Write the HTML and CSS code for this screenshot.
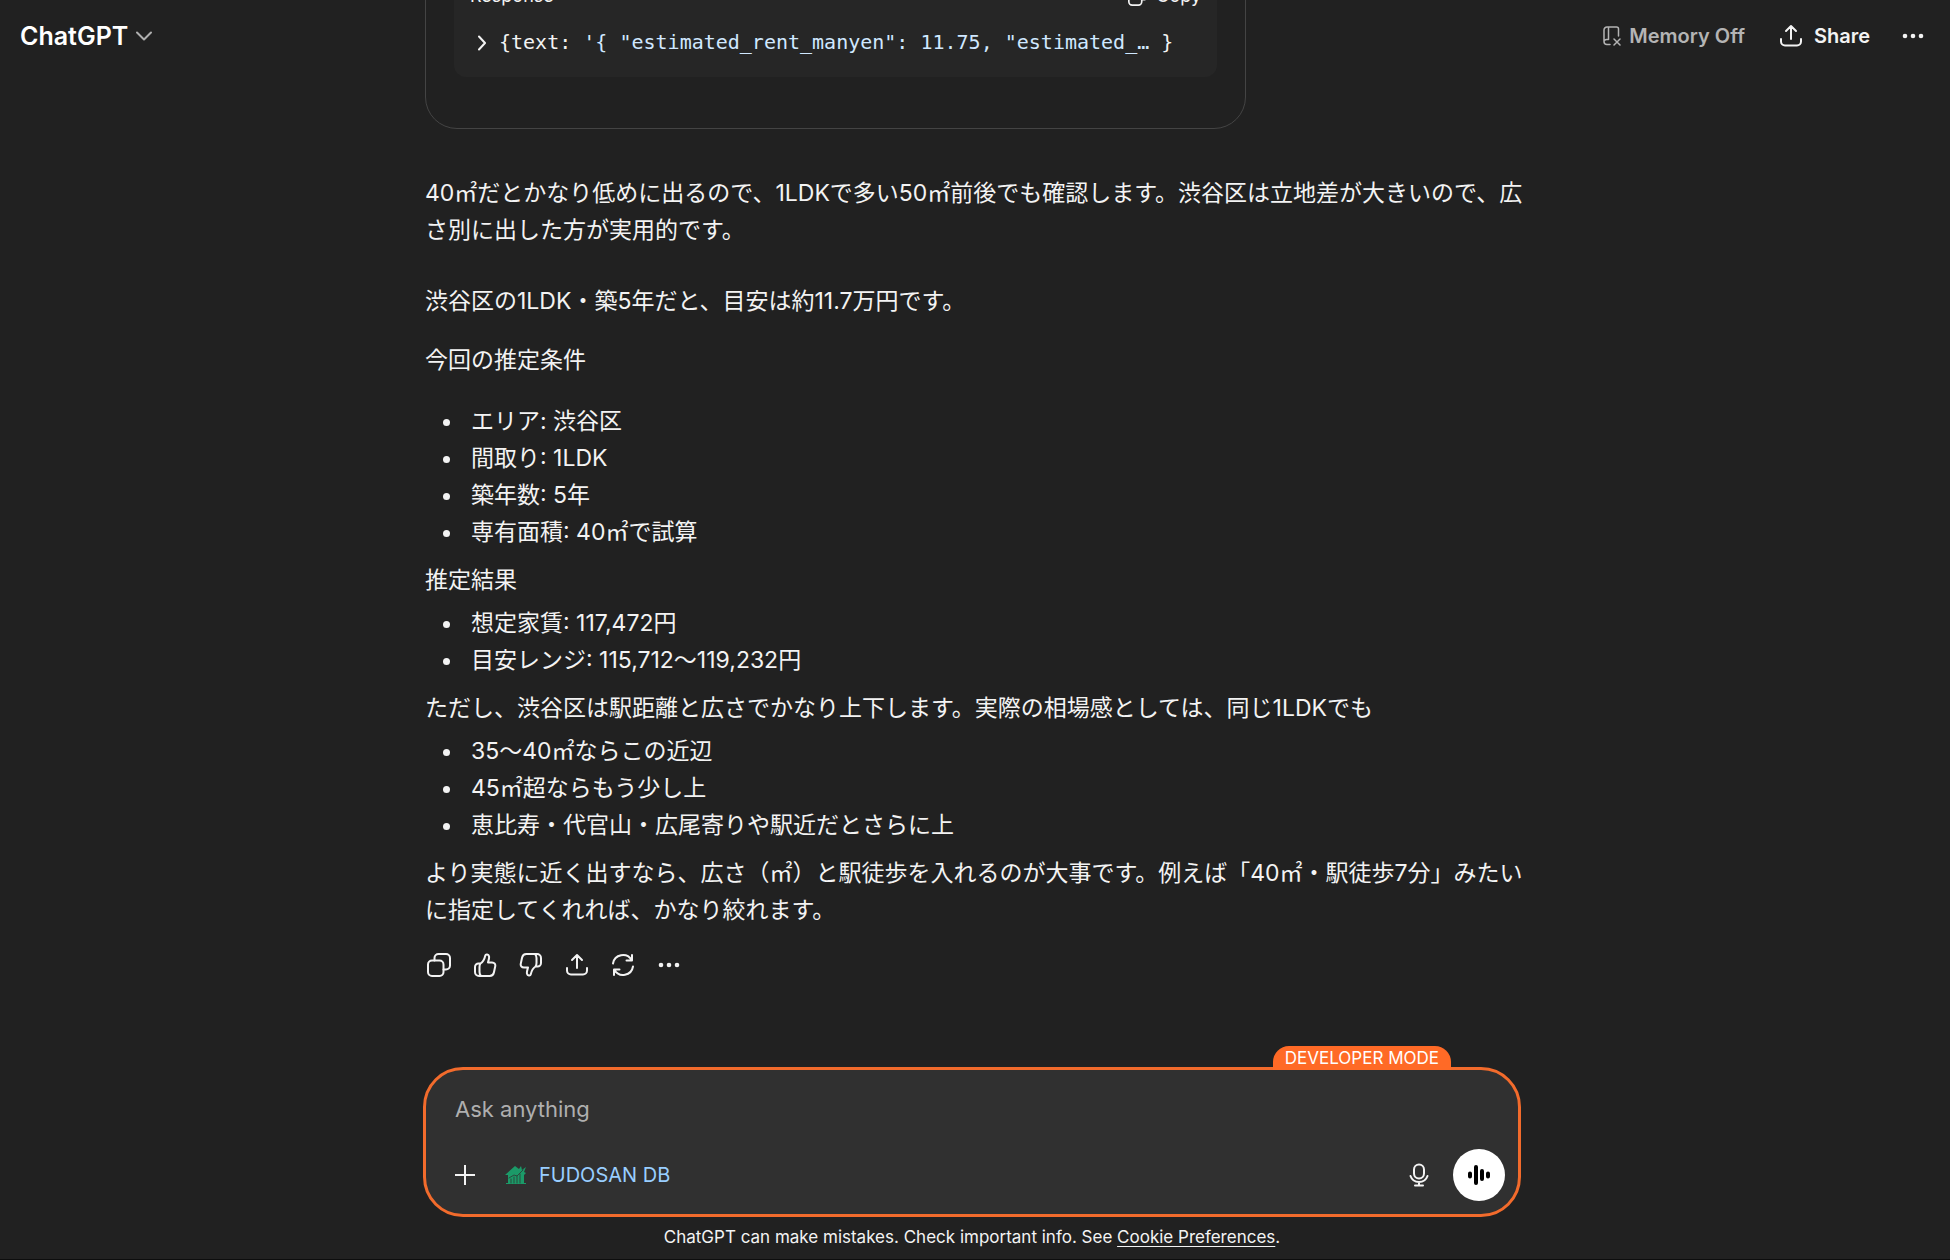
FILE: index.html
```html
<!doctype html>
<html lang="ja">
	<head>
		<title>ChatGPT</title>
		<meta charset="UTF-8">
		<meta name="viewport" content="width=device-width, initial-scale=1.0">
		<link rel="stylesheet" href="styles.css">
	</head>

	<body>
		<!-- shared icons -->
		<svg class="sprite" aria-hidden="true">
			<symbol id="icon-share" viewBox="0 0 24 24">
				<path d="M12 15V2M7 7l5-5 5 5M2 15v2.500a4 4 0 0 0 4 4h12a4 4 0 0 0 4-4V15" />
			</symbol>
			<symbol id="icon-dots" viewBox="0 0 24 24">
				<g fill="currentColor" stroke="none">
					<circle cx="4" cy="12" r="2.300" />
					<circle cx="12" cy="12" r="2.300" />
					<circle cx="20" cy="12" r="2.300" />
				</g>
			</symbol>
			<symbol id="icon-copy" viewBox="0 0 24 24">
				<rect x="1" y="7.500" width="15.500" height="15.500" rx="4" />
				<path d="M7.500 7.500V5a4 4 0 0 1 4-4H19a4 4 0 0 1 4 4v7.500a4 4 0 0 1-4 4h-2.500" />
			</symbol>
		</svg>

		<header class="topbar">
			<button type="button" class="model-button">
				ChatGPT
				<svg class="chevron" viewBox="0 0 16 10"><path d="M1 1.500l7 7 7-7" /></svg>
			</button>

			<div class="topbar-actions">
				<button type="button" class="memory-button">
					<svg class="memory-icon" viewBox="0 0 18 20">
						<path d="M7 18.500H4a3 3 0 0 1-3-3V4a3 3 0 0 1 3-3h9.500a2 2 0 0 1 2 2v7M5.500 1v12.500M1 16a2.500 2.500 0 0 1 2.500-2.500h2M11 13l6 6M17 13l-6 6" />
					</svg>
					Memory Off
				</button>
				<button type="button" class="share-button">
					<svg class="icon"><use href="#icon-share" /></svg>
					Share
				</button>
				<button type="button" class="more-button" aria-label="More">
					<svg class="icon"><use href="#icon-dots" /></svg>
				</button>
			</div>
		</header>

		<main class="thread">
			<div class="column">
				<section class="tool-card">
					<div class="response">
						<div class="response-head">
							<span>Response</span>
							<button type="button" class="copy-button">
								<svg class="icon-small"><use href="#icon-copy" /></svg>
								Copy
							</button>
						</div>
						<div class="json-line">
							<svg class="expand" viewBox="0 0 8 16"><path d="M1 1.500l6 6.500-6 6.500" /></svg>
							<code>{text: <span class="string">'{ "estimated_rent_manyen": 11.75, "estimated_…</span> }</code>
						</div>
					</div>
				</section>

				<article class="message">
					<p class="intro">40㎡だとかなり低めに出るので、1LDKで多い50㎡前後でも確認します。渋谷区は立地差が大きいので、広さ別に出した方が実用的です。</p>
					<p class="summary">渋谷区の1LDK・築5年だと、目安は約11.7万円です。</p>
					<p class="conditions">今回の推定条件</p>
					<ul>
						<li>エリア: 渋谷区</li>
						<li>間取り: 1LDK</li>
						<li>築年数: 5年</li>
						<li>専有面積: 40㎡で試算</li>
					</ul>
					<p>推定結果</p>
					<ul>
						<li>想定家賃: 117,472円</li>
						<li>目安レンジ: 115,712〜119,232円</li>
					</ul>
					<p>ただし、渋谷区は駅距離と広さでかなり上下します。実際の相場感としては、同じ1LDKでも</p>
					<ul>
						<li>35〜40㎡ならこの近辺</li>
						<li>45㎡超ならもう少し上</li>
						<li>恵比寿・代官山・広尾寄りや駅近だとさらに上</li>
					</ul>
					<p>より実態に近く出すなら、広さ（㎡）と駅徒歩を入れるのが大事です。例えば「40㎡・駅徒歩7分」みたいに指定してくれれば、かなり絞れます。</p>
				</article>

				<div class="message-actions">
					<button type="button" aria-label="Copy"><svg class="icon"><use href="#icon-copy" /></svg></button>
					<button type="button" aria-label="Good response">
						<svg class="icon" viewBox="0 0 24 24">
							<path d="M7.500 10.500C10 9 11.500 6 12.300 2.500c.400-1.600 3.200-1.300 3.700.700.500 2-.500 4-1 6.300h4c2.500 0 3.700 1.800 3.200 4l-1.300 6c-.500 2.200-2 3.500-4.200 3.500H6a4 4 0 0 1-4-4v-5a3.500 3.500 0 0 1 3.500-3.500zM7.500 10.500c-.700 1-1 2-1 3.500v5c0 1.500.500 3 1.500 4" />
						</svg>
					</button>
					<button type="button" aria-label="Bad response">
						<svg class="icon flipped" viewBox="0 0 24 24">
							<path d="M7.500 10.500C10 9 11.500 6 12.300 2.500c.400-1.600 3.200-1.300 3.700.700.500 2-.500 4-1 6.300h4c2.500 0 3.700 1.800 3.200 4l-1.300 6c-.500 2.200-2 3.500-4.200 3.500H6a4 4 0 0 1-4-4v-5a3.500 3.500 0 0 1 3.500-3.500zM7.500 10.500c-.700 1-1 2-1 3.500v5c0 1.500.500 3 1.500 4" />
						</svg>
					</button>
					<button type="button" aria-label="Share"><svg class="icon"><use href="#icon-share" /></svg></button>
					<button type="button" aria-label="Try again">
						<svg class="icon" viewBox="0 0 24 24">
							<path d="M2 10.500A10 10 0 0 1 20.500 7M21 2v5.500h-5.500M22 13.500A10 10 0 0 1 3.500 17M3 22v-5.500h5.500" />
						</svg>
					</button>
					<button type="button" aria-label="More"><svg class="icon"><use href="#icon-dots" /></svg></button>
				</div>
			</div>
		</main>

		<footer class="dock">
			<form class="composer">
				<span class="mode-badge">DEVELOPER MODE</span>
				<input type="text" class="prompt" placeholder="Ask anything" aria-label="Ask anything">
				<div class="composer-row">
					<button type="button" aria-label="Add">
						<svg class="icon-small" viewBox="0 0 20 20"><path d="M10 0v20M0 10h20" /></svg>
					</button>
					<button type="button" class="app-button">
						<svg class="house" viewBox="0 0 22 20">
							<path d="M0 10L10 1l4 3 2-3 1 4 4-3-2 5 2 1-2 2v8h2v1H1v-1h2v-8z" />
							<path class="house-lines" d="M6 18v-4M9 18v-6M12 18v-7M15 18V9M4 13l5-3 3 1 6-6" />
						</svg>
						FUDOSAN DB
					</button>
					<button type="button" class="mic-button" aria-label="Dictate">
						<svg class="icon" viewBox="0 0 24 24">
							<path d="M12 1.500a5 5 0 0 1 5 5v4a5 5 0 0 1-10 0v-4a5 5 0 0 1 5-5zM3.500 13a9 9 0 0 0 17 0M12 19v3.500M8 22.500h8" />
						</svg>
					</button>
					<button type="button" class="voice-button" aria-label="Voice mode">
						<svg class="icon" viewBox="0 0 24 24"><path d="M3 10.500v3M9 4v16M15 8v8M21 10.500v3" /></svg>
					</button>
				</div>
			</form>
			<p class="note">ChatGPT can make mistakes. Check important info. See <a href="#">Cookie Preferences</a>.</p>
		</footer>
	</body>
</html>
```

FILE: styles.css
```css
* {
	box-sizing: border-box;
	padding: 0;
	margin: 0;
}

body {
	display: grid;
	grid-template-rows: minmax(0, 1fr) auto;
	height: 100vh;
	overflow: hidden;
	color: #f3f3f3;
	background: #212121;
	border-bottom: 1px solid #0d0d0d;
	font-family: Inter, "Noto Sans CJK JP", sans-serif;
	font-size: 23px;
	line-height: 37px;
}

button {
	display: flex;
	align-items: center;
	color: inherit;
	background: none;
	border: none;
	font: inherit;
	cursor: pointer;
}

button:hover {
	opacity: 0.8;
}

svg {
	flex: none;
	fill: none;
	stroke: currentColor;
	stroke-width: 2;
	stroke-linecap: round;
	stroke-linejoin: round;
}

.sprite {
	position: absolute;
	width: 0;
	height: 0;
}

.icon {
	width: 24px;
	height: 24px;
}

.icon-small {
	width: 20px;
	height: 20px;
}

.flipped {
	transform: rotate(180deg);
}


.topbar {
	grid-area: 1 / 1;
	align-self: start;
	z-index: 1;
	display: flex;
	justify-content: space-between;
	align-items: center;
	height: 72px;
	padding: 0 25px 0 20px;
	pointer-events: none;
}

.topbar button {
	pointer-events: auto;
}

.topbar-actions {
	display: flex;
	align-items: center;
	font-size: 20px;
	font-weight: 600;
}

.model-button {
	gap: 8px;
	color: #fff;
	font-size: 25px;
	font-weight: 600;
}

.chevron {
	width: 16px;
	height: 10px;
	color: #afafaf;
}

.memory-button {
	gap: 8px;
	margin-right: 34px;
	color: #b4b4b4;
}

.memory-icon {
	width: 18px;
	height: 20px;
	stroke-width: 1.5;
}

.share-button {
	gap: 11px;
	margin-right: 31px;
}


.thread {
	grid-area: 1 / 1;
	display: flex;
	flex-direction: column;
	justify-content: flex-end;
	align-items: center;
	min-height: 0;
	padding: 0 28px 90px;
	overflow: hidden;
}

.column {
	width: 100%;
	max-width: 1100px;
}

.tool-card {
	max-width: 821px;
	margin-bottom: 46px;
	padding: 28px;
	padding-bottom: 51px;
	border: 1px solid #444;
	border-radius: 32px;
}

.response {
	padding: 16px;
	background: #262626;
	border-radius: 12px;
	font-size: 18px;
}

.response-head {
	display: flex;
	justify-content: space-between;
	align-items: center;
	margin-bottom: 10px;
}

.copy-button {
	gap: 8px;
}

.json-line {
	display: flex;
	align-items: center;
	gap: 13px;
	padding-left: 8px;
}

.expand {
	width: 8px;
	height: 16px;
}

code {
	font-family: "DejaVu Sans Mono", monospace;
	font-size: 20px;
	white-space: nowrap;
}

.string {
	color: #d0e8ff;
}


.message p {
	margin-top: 11px;
}

.message ul {
	margin-top: 6px;
	padding-left: 39px;
}

.message li {
	padding-left: 7px;
}

.message .intro {
	margin-top: 0;
}

.message .summary {
	margin-top: 34px;
}

.message .conditions {
	margin-top: 22px;
}

.message .conditions + ul {
	margin-top: 24px;
}

.message-actions {
	display: flex;
	gap: 22px;
	margin-top: 24px;
	padding-left: 2px;
}


.dock {
	display: flex;
	flex-direction: column;
	align-items: center;
	padding: 0 29px 1px 23px;
}

.composer {
	position: relative;
	width: 100%;
	max-width: 1098px;
	padding: 21px 13px 13px 29px;
	background: #303030;
	border: 3px solid #f26b2c;
	border-radius: 40px;
}

.mode-badge {
	position: absolute;
	right: 67px;
	bottom: 100%;
	height: 24px;
	padding: 0 12px;
	color: #fff;
	background: #ff6a26;
	border-radius: 16px 16px 0 0;
	font-size: 17px;
	line-height: 24px;
}

.prompt {
	display: block;
	width: 100%;
	height: 36px;
	color: inherit;
	background: none;
	border: none;
	outline: none;
	font: inherit;
	font-size: 22px;
}

.prompt::placeholder {
	color: #afafaf;
	opacity: 1;
}

.composer-row {
	display: flex;
	align-items: center;
	margin-top: 22px;
}

.app-button {
	gap: 12px;
	margin-left: 30px;
	color: #99ceff;
	font-size: 20px;
}

.house {
	width: 22px;
	height: 20px;
	fill: #1b9a68;
	stroke: none;
}

.house-lines {
	fill: none;
	stroke: #2b4a3d;
	stroke-width: 1;
}

.mic-button {
	margin-left: auto;
}

.voice-button {
	justify-content: center;
	width: 52px;
	height: 52px;
	margin-left: 22px;
	color: #000;
	background: #fff;
	border-radius: 50%;
}

.voice-button svg {
	stroke-width: 4;
}

.note {
	font-size: 17px;
	line-height: 41px;
}

.note a {
	color: inherit;
	text-underline-offset: 3px;
}
```
